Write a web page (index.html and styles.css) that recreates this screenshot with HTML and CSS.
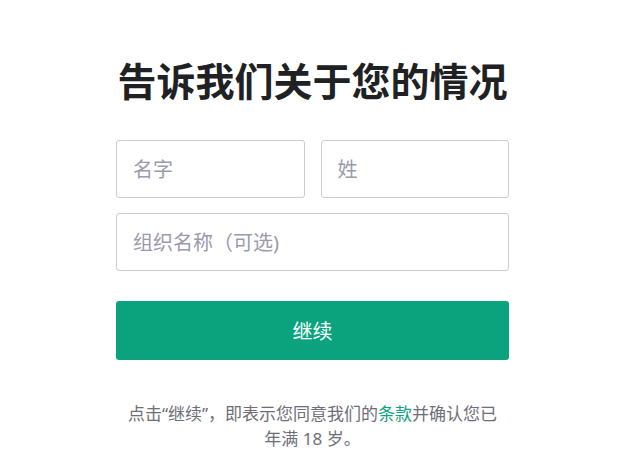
FILE: index.html
```html
<!DOCTYPE html>
<html lang="zh-CN">
<head>
<meta charset="utf-8">
<title>告诉我们关于您的情况</title>
<link rel="stylesheet" href="styles.css">
</head>
<body>
<main class="page">
  <section class="card">
    <h1 class="title">告诉我们关于您的情况</h1>
    <form class="form">
      <div class="row">
        <input class="field field-half" type="text" placeholder="名字">
        <input class="field field-half" type="text" placeholder="姓">
      </div>
      <input class="field" type="text" placeholder="组织名称（可选)">
      <button class="btn" type="button">继续</button>
    </form>
    <p class="note">点击“继续”，即表示您同意我们的<a class="link" href="#">条款</a>并确认您已年满 18 岁。</p>
  </section>
</main>
</body>
</html>
```

FILE: styles.css
```css
html, body {
  margin: 0;
  padding: 0;
  background: #ffffff;
}

body {
  font-family: "Noto Sans", "Noto Sans CJK SC", sans-serif;
  color: #202123;
}

.page {
  display: flex;
  padding-left: 116px;
  padding-top: 55px;
}

.card {
  width: 393px;
  display: flex;
  flex-direction: column;
}

.title {
  margin: 0;
  font-size: 39px;
  line-height: 48px;
  font-weight: 700;
  text-align: center;
  color: #202123;
  font-family: "Noto Sans CJK SC", sans-serif;
}

.form {
  margin-top: 37px;
  display: flex;
  flex-direction: column;
  gap: 15px;
}

.row {
  display: flex;
  gap: 16px;
}

.field {
  flex: none;
  width: 100%;
  min-width: 0;
  box-sizing: border-box;
  height: 58px;
  border: 1px solid #c9ccd6;
  border-radius: 3px;
  padding: 0 16px;
  font-family: "Noto Sans", "Noto Sans CJK SC", sans-serif;
  font-size: 20px;
  color: #202123;
  background: #fff;
  outline: none;
}

.field-half {
  flex: 1 1 0;
  width: auto;
}

.field::placeholder {
  color: #9a9aac;
}

.btn {
  margin-top: 15px;
  height: 59px;
  border: none;
  border-radius: 3px;
  background: #0aa37e;
  color: #ffffff;
  font-family: "Noto Sans CJK SC", sans-serif;
  font-size: 20px;
  cursor: pointer;
}

.note {
  margin: 41px 0 0;
  padding: 0 7px;
  font-size: 17px;
  line-height: 25px;
  text-align: center;
  color: #6e6e78;
}

.link {
  color: #10a37f;
  text-decoration: none;
}
```
